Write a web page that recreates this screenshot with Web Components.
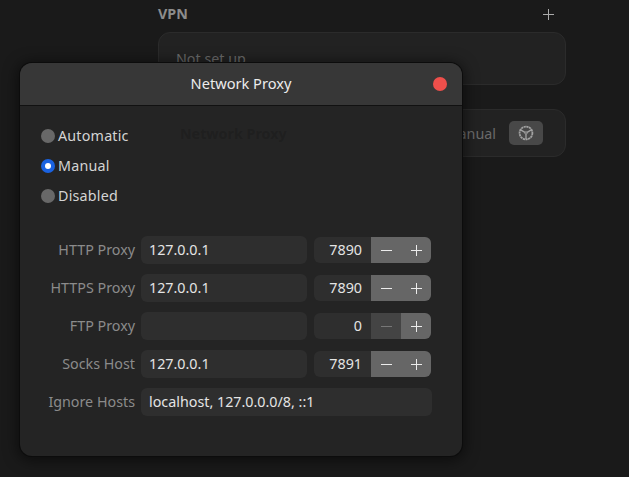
<!DOCTYPE html>
<html>
<head>
<meta charset="utf-8">
<title>Network Proxy</title>
<style>
  html, body { margin: 0; height: 100%; overflow: hidden; background: #1a1a1a; }
  body { font-family: "Noto Sans", "DejaVu Sans", sans-serif; font-size: 14.3px; position: relative; }
</style>
</head>
<body>
<settings-page></settings-page>
<proxy-dialog>
  <radio-option>Automatic</radio-option>
  <radio-option checked>Manual</radio-option>
  <radio-option>Disabled</radio-option>
  <proxy-row slot="rows" label="HTTP Proxy" host="127.0.0.1" port="7890"></proxy-row>
  <proxy-row slot="rows" label="HTTPS Proxy" host="127.0.0.1" port="7890"></proxy-row>
  <proxy-row slot="rows" label="FTP Proxy" host="" port="0"></proxy-row>
  <proxy-row slot="rows" label="Socks Host" host="127.0.0.1" port="7891"></proxy-row>
  <proxy-row slot="rows" label="Ignore Hosts" host="localhost, 127.0.0.0/8, ::1"></proxy-row>
</proxy-dialog>

<script>
/* ---------- background settings panel, dimmed behind the dialog ---------- */
class SettingsPage extends HTMLElement {
  constructor() {
    super();
    this.attachShadow({ mode: 'open' }).innerHTML = `
      <style>
        :host { display: block; width: 408px; margin-left: 158px; padding-top: 3px; }
        .head { display: flex; justify-content: space-between; align-items: center; height: 20px; padding-right: 12px; margin-bottom: 9px; }
        h2 { margin: 0; font-size: 14.3px; font-weight: 700; color: #8c8c8c; }
        .plus { position: relative; top: 1px; }
        .card { box-sizing: border-box; display: flex; align-items: center; background: #222; border: 1px solid #2b2b2b; border-radius: 12px; padding: 0 22px 0 17px; color: #6a6a6a; }
        .vpn { height: 53px; margin-bottom: 24px; }
        .proxy { height: 48px; justify-content: space-between; }
        /* shows faintly through the dialog */
        .ghost { position: relative; z-index: 2; margin-left: 4px; font-weight: 700; color: rgba(0,0,0,.15); }
        .end { display: flex; align-items: center; gap: 13px; }
        .gear { width: 34px; height: 24px; background: #484848; border-radius: 5px; display: flex; align-items: center; justify-content: center; }
      </style>
      <div class="head">
        <h2>VPN</h2>
        <svg class="plus" width="11" height="11" viewBox="0 0 11 11"><path d="M5.5 0v11M0 5.5h11" stroke="#ababab" stroke-width="1"/></svg>
      </div>
      <div class="card vpn">Not set up</div>
      <div class="card proxy">
        <span class="ghost">Network Proxy</span>
        <div class="end">
          <span>Manual</span>
          <div class="gear">
            <svg width="16" height="16" viewBox="0 0 16 16" fill="none" stroke="#a2a2a2">
              <circle cx="8" cy="8" r="6.4" stroke-width="1.8" stroke-dasharray="2.2 .5"/>
              <circle cx="8" cy="8" r="1.2" stroke-width="1"/>
              <path d="M8 9.2V14M7 7.4L2.6 4.9M9 7.4l4.4-2.5" stroke-width="1.3"/>
            </svg>
          </div>
        </div>
      </div>`;
  }
}

/* ---------- the floating dialog window ---------- */
class ProxyDialog extends HTMLElement {
  constructor() {
    super();
    this.attachShadow({ mode: 'open' }).innerHTML = `
      <style>
        :host { position: absolute; left: 20px; top: 63px; width: 442px; height: 393px; box-sizing: border-box; display: flex; flex-direction: column;
                background: #242424; border-radius: 12px; box-shadow: 0 0 0 1px #0c0c0c, 0 2px 14px 3px rgba(0,0,0,.5); overflow: hidden; }
        header { flex: none; box-sizing: border-box; height: 43px; padding-bottom: 2px; display: flex; align-items: center; justify-content: center; position: relative;
                 background: #373737; border-bottom: 1px solid #111; color: #ececec; font-size: 14.6px; }
        .close { position: absolute; left: 413px; top: 14px; width: 14px; height: 14px; border-radius: 50%; background: #ee4f4b; }
        .radios { display: flex; flex-direction: column; padding: 15px 0 0 21px; }
        .rows { display: flex; flex-direction: column; gap: 10px; padding-top: 25px; }
      </style>
      <header>Network Proxy<span class="close"></span></header>
      <div class="radios"><slot></slot></div>
      <div class="rows"><slot name="rows"></slot></div>`;
  }
}

class RadioOption extends HTMLElement {
  constructor() {
    super();
    this.attachShadow({ mode: 'open' }).innerHTML = `
      <style>
        :host { display: flex; align-items: center; height: 30px; gap: 3px; color: #d4d4d4; }
        .dot { width: 14px; height: 14px; border-radius: 50%; background: #686868; display: flex; align-items: center; justify-content: center; }
        .text { padding-bottom: 2px; letter-spacing: .2px; }
        :host([checked]) .dot { background: #1a62e0; }
        :host([checked]) .dot::after { content: ""; width: 6px; height: 6px; border-radius: 50%; background: #fff; }
      </style>
      <span class="dot"></span><span class="text"><slot></slot></span>`;
  }
}

/* ---------- label + entry + optional port spinner ---------- */
class ProxyRow extends HTMLElement {
  connectedCallback() {
    const port = this.getAttribute('port');
    const atZero = port === '0';
    this.attachShadow({ mode: 'open' }).innerHTML = `
      <style>
        :host { display: flex; align-items: center; height: 28px; color: #e4e4e4; }
        label { width: 115px; padding-bottom: 2px; text-align: right; color: #8b8b8b; margin-right: 6px; white-space: nowrap; }
        .entry { box-sizing: border-box; flex: 1; height: 28px; line-height: 27px; padding-left: 8px; background: #2e2e2e; border-radius: 6px; }
        .wide { margin-right: 30px; }
        .spin { flex: none; display: flex; width: 117px; height: 26px; margin: 0 31px 0 7px; border-radius: 6px; overflow: hidden; background: #2e2e2e; }
        .value { flex: 1; line-height: 25px; text-align: right; padding-right: 9px; }
        .btn { width: 30px; display: flex; align-items: center; justify-content: center; background: #666; }
        .btn svg { stroke: #ececec; }
        .off { background: #444; }
        .off svg { stroke: #777; }
      </style>
      <label>${this.getAttribute('label')}</label>
      <div class="entry ${port === null ? 'wide' : ''}">${this.getAttribute('host')}</div>
      ${port === null ? '' : `
      <div class="spin">
        <div class="value">${port}</div>
        <div class="btn ${atZero ? 'off' : ''}"><svg width="11" height="11" viewBox="0 0 11 11"><path d="M0 5.5h11"/></svg></div>
        <div class="btn"><svg width="11" height="11" viewBox="0 0 11 11"><path d="M5.5 0v11M0 5.5h11"/></svg></div>
      </div>`}`;
  }
}

customElements.define('settings-page', SettingsPage);
customElements.define('proxy-dialog', ProxyDialog);
customElements.define('radio-option', RadioOption);
customElements.define('proxy-row', ProxyRow);
</script>
</body>
</html>
